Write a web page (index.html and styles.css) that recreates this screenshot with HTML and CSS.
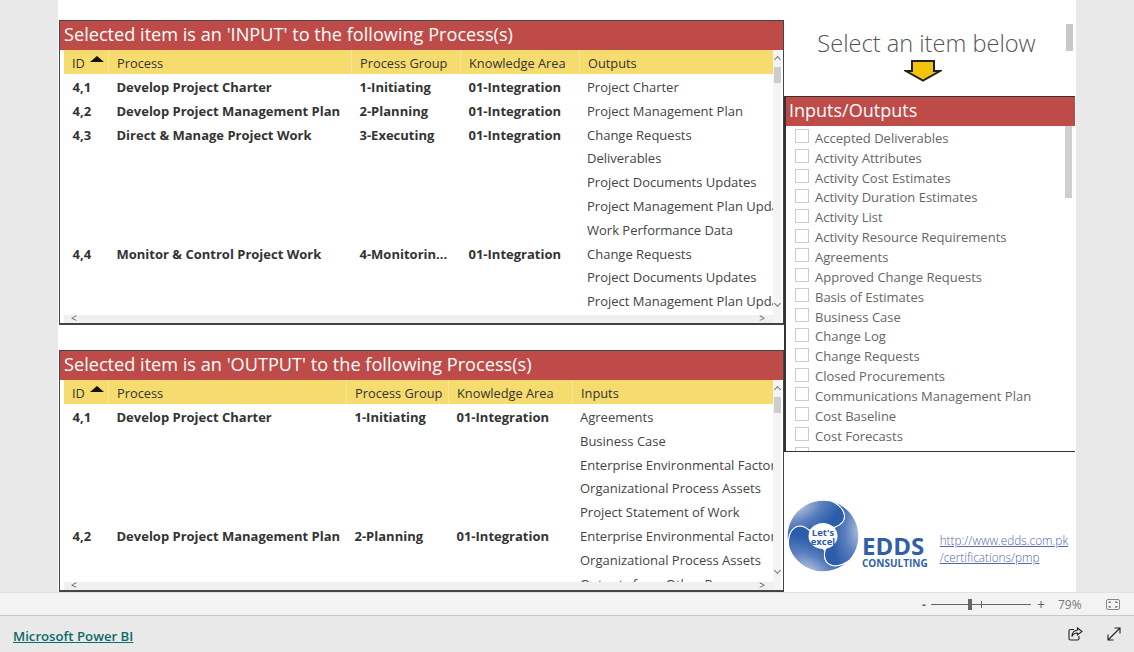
FILE: index.html
```html
<!DOCTYPE html>
<html lang="en">
<head>
  <meta charset="UTF-8" />
  <title>Microsoft Power BI</title>
  <link rel="stylesheet" href="styles.css">
</head>
<body>
  <div class="canvas">
    <div class="report">
      <div class="left-col">
        <div class="panel panel-input">
          <div class="panel-title">Selected item is an 'INPUT' to the following Process(s)</div>
          <div class="table-wrap">
            <div class="table">
              <div class="row head">
                <div>ID<span class="sort"></span></div><div>Process</div><div>Process Group</div><div>Knowledge Area</div><div>Outputs</div>
              </div>
              <div class="rows">
                <div class="row"><b>4,1</b><b>Develop Project Charter</b><b>1-Initiating</b><b>01-Integration</b><div>Project Charter</div></div>
                <div class="row"><b>4,2</b><b>Develop Project Management Plan</b><b>2-Planning</b><b>01-Integration</b><div>Project Management Plan</div></div>
                <div class="row"><b>4,3</b><b>Direct &amp; Manage Project Work</b><b>3-Executing</b><b>01-Integration</b><div>Change Requests</div></div>
                <div class="row"><b></b><b></b><b></b><b></b><div>Deliverables</div></div>
                <div class="row"><b></b><b></b><b></b><b></b><div>Project Documents Updates</div></div>
                <div class="row"><b></b><b></b><b></b><b></b><div>Project Management Plan Updates</div></div>
                <div class="row"><b></b><b></b><b></b><b></b><div>Work Performance Data</div></div>
                <div class="row"><b>4,4</b><b>Monitor &amp; Control Project Work</b><b>4-Monitorin...</b><b>01-Integration</b><div>Change Requests</div></div>
                <div class="row"><b></b><b></b><b></b><b></b><div>Project Documents Updates</div></div>
                <div class="row"><b></b><b></b><b></b><b></b><div>Project Management Plan Updates</div></div>
              </div>
              <div class="hscroll"><span>&lt;</span><span>&gt;</span></div>
            </div>
            <div class="vscroll"><span class="up"></span><span class="thumb"></span><span class="down"></span></div>
          </div>
        </div>

        <div class="panel panel-output">
          <div class="panel-title">Selected item is an 'OUTPUT' to the following Process(s)</div>
          <div class="table-wrap">
            <div class="table">
              <div class="row head">
                <div>ID<span class="sort"></span></div><div>Process</div><div>Process Group</div><div>Knowledge Area</div><div>Inputs</div>
              </div>
              <div class="rows">
                <div class="row"><b>4,1</b><b>Develop Project Charter</b><b>1-Initiating</b><b>01-Integration</b><div>Agreements</div></div>
                <div class="row"><b></b><b></b><b></b><b></b><div>Business Case</div></div>
                <div class="row"><b></b><b></b><b></b><b></b><div>Enterprise Environmental Factors</div></div>
                <div class="row"><b></b><b></b><b></b><b></b><div>Organizational Process Assets</div></div>
                <div class="row"><b></b><b></b><b></b><b></b><div>Project Statement of Work</div></div>
                <div class="row"><b>4,2</b><b>Develop Project Management Plan</b><b>2-Planning</b><b>01-Integration</b><div>Enterprise Environmental Factors</div></div>
                <div class="row"><b></b><b></b><b></b><b></b><div>Organizational Process Assets</div></div>
                <div class="row"><b></b><b></b><b></b><b></b><div>Outputs from Other Processes</div></div>
              </div>
              <div class="hscroll"><span>&lt;</span><span>&gt;</span></div>
            </div>
            <div class="vscroll"><span class="up"></span><span class="thumb"></span><span class="down"></span></div>
          </div>
        </div>
      </div>

      <div class="right-col">
        <div class="picker-head">
          <div class="picker-text">Select an item below</div>
          <svg class="arrow" width="38" height="24" viewBox="0 0 38 24">
            <path d="M8 2H30V12H36L19 21.500L2 12H8Z" fill="#f2c40c" stroke="#222" stroke-width="2"/>
          </svg>
          <span class="head-scroll"></span>
        </div>

        <div class="slicer">
          <div class="slicer-title">Inputs/Outputs</div>
          <div class="slicer-body">
            <ul class="slicer-list">
              <li><i></i>Accepted Deliverables</li>
              <li><i></i>Activity Attributes</li>
              <li><i></i>Activity Cost Estimates</li>
              <li><i></i>Activity Duration Estimates</li>
              <li><i></i>Activity List</li>
              <li><i></i>Activity Resource Requirements</li>
              <li><i></i>Agreements</li>
              <li><i></i>Approved Change Requests</li>
              <li><i></i>Basis of Estimates</li>
              <li><i></i>Business Case</li>
              <li><i></i>Change Log</li>
              <li><i></i>Change Requests</li>
              <li><i></i>Closed Procurements</li>
              <li><i></i>Communications Management Plan</li>
              <li><i></i>Cost Baseline</li>
              <li><i></i>Cost Forecasts</li>
              <li><i></i></li>
            </ul>
            <div class="slicer-scroll"><span></span></div>
          </div>
        </div>

        <div class="brand">
          <svg class="swirl" width="72" height="72" viewBox="-36 -36 72 72">
            <defs>
              <radialGradient id="seg" cx="1" cy="0.45" r="0.8">
                <stop offset="0" stop-color="#aebcdc"/>
                <stop offset="0.5" stop-color="#5a7fbe"/>
                <stop offset="1" stop-color="#2c5dab"/>
              </radialGradient>
            </defs>
            <g stroke="#fff" stroke-width="1" fill="url(#seg)">
              <path d="M8 -35A36 36 0 0 1 26.300 24.400C12.200 34.800 -0.900 29.500 1.800 14.900L12 -9C26 -14 24 -28 8 -35Z"/>
              <path d="M8 -35A36 36 0 0 1 26.300 24.400C12.200 34.800 -0.900 29.500 1.800 14.900L12 -9C26 -14 24 -28 8 -35Z" transform="rotate(120)"/>
              <path d="M8 -35A36 36 0 0 1 26.300 24.400C12.200 34.800 -0.900 29.500 1.800 14.900L12 -9C26 -14 24 -28 8 -35Z" transform="rotate(240)"/>
            </g>
            <ellipse rx="14.500" ry="13" fill="#fff"/>
            <text class="swirl-text" y="-0.500" text-anchor="middle">Let's</text>
            <text class="swirl-text" y="9" text-anchor="middle">excel</text>
          </svg>
          <div class="brand-name">
            <div class="edds">EDDS</div>
            <div class="consulting">CONSULTING</div>
          </div>
          <a class="brand-link" href="#">http://www.edds.com.pk<br>/certifications/pmp</a>
        </div>
      </div>
    </div>
  </div>

  <div class="zoom-bar">
    <span class="zoom-sign">-</span>
    <div class="slider"><span class="tick"></span><span class="knob"></span></div>
    <span class="zoom-sign plus">+</span>
    <span class="zoom-pct">79%</span>
    <svg class="fit" width="14" height="11" viewBox="0 0 14 11" fill="none" stroke="#555">
      <rect x="0.500" y="0.500" width="13" height="10" rx="1.500" stroke="#888"/>
      <path d="M3 4V3H5M9 3H11V4M11 7V8H9M5 8H3V7"/>
    </svg>
  </div>

  <div class="footer">
    <a class="pbi-link" href="#">Microsoft Power BI</a>
    <div class="footer-icons">
      <svg width="15" height="14" viewBox="0 0 15 14" fill="none" stroke="#222" stroke-width="1.100">
        <path d="M6 2.500H2.500Q1 2.500 1 4V11.500Q1 13 2.500 13H9.500Q11 13 11 11.500V9"/>
        <path d="M9.500 1L14 4.500L9.500 8V6C7 6 5 7 4 9.500C4 6 6 3.500 9.500 3Z"/>
      </svg>
      <svg width="14" height="14" viewBox="0 0 14 14" fill="none" stroke="#222" stroke-width="1.100">
        <path d="M1 13L13 1M7.500 1H13V6.500M1 7.500V13H6.500"/>
      </svg>
    </div>
  </div>
</body>
</html>
```

FILE: styles.css
```css
* {
  box-sizing: border-box;
}
body {
  margin: 0;
  height: 652px;
  overflow: hidden;
  font-family: "Open Sans", "Noto Sans", sans-serif;
  background-color: #e9e9e9;
  color: #333;
}

/* report area */
.canvas {
  height: 592px;
  padding: 0 58px;
}
.report {
  display: flex;
  height: 592px;
  background: white;
  padding-left: 1px;
}
.left-col {
  width: 725px;
  padding-top: 20px;
}

/* table panels */
.panel {
  display: flex;
  flex-direction: column;
  background: white;
  border: 1px solid #444;
  border-width: 1px 1px 2px 1px;
}
.panel-input {
  height: 305px;
  margin-bottom: 25px;
}
.panel-output {
  height: 242px;
}
.panel-title {
  height: 29px;
  flex: none;
  background-color: #be4b48;
  color: white;
  font-size: 18.150px;
  line-height: 26px;
  padding-left: 4px;
  white-space: nowrap;
}
.table-wrap {
  flex: 1;
  min-height: 0;
  display: flex;
  padding-left: 4px;
}
.table {
  width: 709px;
  display: flex;
  flex-direction: column;
}
.rows {
  flex: 1;
  min-height: 0;
  overflow: hidden;
}
.row {
  display: grid;
  height: 23.800px;
  font-size: 13px;
  line-height: 24px;
  color: #444;
}
.panel-input .row {
  grid-template-columns: 44px 243px 109px 119px 194px;
}
.panel-output .row {
  grid-template-columns: 44px 238px 102px 124px 201px;
}
.row > * {
  height: 23.800px;
  padding: 1px 0 0 8px;
  white-space: nowrap;
  overflow: hidden;
}
.row b {
  color: #333;
  padding-left: 8.500px;
}
.row.head {
  height: 24px;
  flex: none;
  background-color: #f6dc6e;
  color: #333;
  font-size: 12.800px;
}
.row.head > div {
  border-left: 1px solid #f9e594;
}
.row.head > div:first-child {
  border-left: none;
}
.sort {
  display: inline-block;
  margin-left: 5px;
  vertical-align: 6px;
  border-left: 7px solid transparent;
  border-right: 7px solid transparent;
  border-bottom: 6px solid #111;
}

/* scrollbars */
.hscroll {
  height: 8px;
  flex: none;
  display: flex;
  justify-content: space-between;
  padding: 0 8px 0 7px;
  background-color: #f0f0f0;
  color: #555;
  font-size: 10px;
  line-height: 7px;
}
.vscroll {
  width: 8px;
  display: flex;
  flex-direction: column;
  align-items: center;
  background-color: #f4f4f4;
  padding: 7px 0 17px;
}
.vscroll .up, .vscroll .down {
  width: 5px;
  height: 5px;
  border: 1px solid #777;
  border-width: 1px 0 0 1px;
  transform: rotate(45deg);
}
.vscroll .down {
  transform: rotate(225deg);
  margin-top: auto;
}
.vscroll .thumb {
  width: 7px;
  height: 16px;
  margin-top: 5px;
  background-color: #cdcdcd;
}

/* right side */
.right-col {
  flex: 1;
  display: flex;
  flex-direction: column;
  margin-right: 1px;
}
.picker-head {
  position: relative;
  height: 96px;
  padding: 26px 6px 0 0;
  display: flex;
  flex-direction: column;
  align-items: center;
}
.picker-text {
  font-size: 23.600px;
  font-weight: 300;
  line-height: 34px;
  color: #555;
}
.arrow {
  margin: -1px 8px 0 0;
}
.head-scroll {
  position: absolute;
  top: 24px;
  right: 2px;
  width: 7px;
  height: 27px;
  background-color: #c8c8c8;
}

/* slicer */
.slicer {
  height: 356px;
  border: 1px solid #333;
  border-width: 1px 0 1px 2px;
  display: flex;
  flex-direction: column;
  overflow: hidden;
}
.slicer-title {
  height: 29px;
  flex: none;
  background-color: #be4b48;
  color: white;
  font-size: 18px;
  line-height: 26px;
  padding-left: 3px;
}
.slicer-body {
  flex: 1;
  min-height: 0;
  display: flex;
}
.slicer-list {
  flex: 1;
  list-style: none;
  margin: 0;
  padding: 2px 0 0 9px;
  overflow: hidden;
}
.slicer-list li {
  height: 19.850px;
  display: flex;
  align-items: center;
  font-size: 13px;
  color: #666;
  white-space: nowrap;
}
.slicer-list i {
  width: 14px;
  height: 14px;
  margin-right: 6px;
  margin-top: -3px;
  border: 1px solid #ccc;
}
.slicer-scroll {
  width: 7px;
  margin-right: 3px;
}
.slicer-scroll span {
  display: block;
  height: 72px;
  background-color: #cfcfcf;
}

/* logo */
.brand {
  display: flex;
  align-items: flex-start;
  padding: 48px 0 0 3px;
}
.swirl-text {
  font-size: 9.500px;
  font-weight: 700;
  fill: #2c5dab;
}
.brand-name {
  margin: 35px 0 0 3px;
  color: #2f5fa9;
  font-weight: 700;
}
.edds {
  font-size: 24px;
  line-height: 22px;
}
.consulting {
  font-size: 10px;
  line-height: 12px;
}
.brand-link {
  margin: 32px 0 0 12px;
  font-size: 11.800px;
  line-height: 17px;
  color: #5666b0;
  font-weight: 300;
}

/* bottom bars */
.zoom-bar {
  height: 23px;
  display: flex;
  align-items: center;
  background-color: #f3f3f3;
  border-top: 1px solid #e2e2e2;
  padding-left: 922px;
  color: #666;
  font-size: 12px;
}
.zoom-sign {
  width: 9px;
  font-weight: 700;
}
.zoom-sign.plus {
  margin-left: 6px;
  width: 14px;
  font-weight: 400;
  font-size: 14px;
}
.slider {
  position: relative;
  width: 100px;
  height: 1px;
  background-color: #666;
}
.slider .tick {
  position: absolute;
  left: 50px;
  top: -3px;
  width: 1px;
  height: 7px;
  background-color: #666;
}
.slider .knob {
  position: absolute;
  left: 37px;
  top: -5px;
  width: 4px;
  height: 11px;
  background-color: #666;
}
.zoom-pct {
  margin-left: 7px;
  width: 48px;
  color: #777;
}
.footer {
  height: 37px;
  display: flex;
  align-items: center;
  justify-content: space-between;
  background-color: #e9e9e9;
  border-top: 1px solid #c8c8c8;
  padding: 0 13px;
}
.pbi-link {
  margin-top: 3px;
  font-size: 13.200px;
  font-weight: 600;
  color: #0f6a6a;
}
.footer-icons {
  display: flex;
  gap: 24px;
}
```
